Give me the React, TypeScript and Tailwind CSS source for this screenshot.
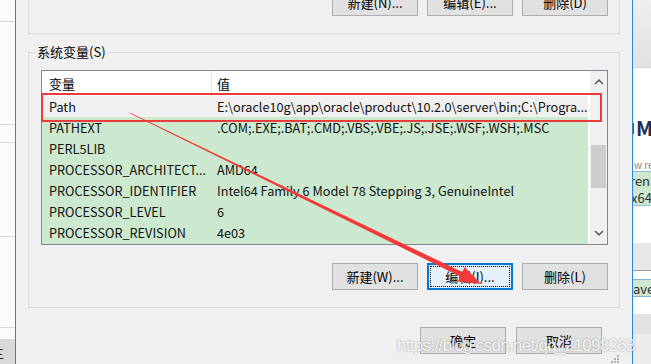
import React from "react";

const rows: [string, string][] = [
  ["Path", "E:\\oracle10g\\app\\oracle\\product\\10.2.0\\server\\bin;C:\\Progra..."],
  ["PATHEXT", ".COM;.EXE;.BAT;.CMD;.VBS;.VBE;.JS;.JSE;.WSF;.WSH;.MSC"],
  ["PERL5LIB", ""],
  ["PROCESSOR_ARCHITECT...", "AMD64"],
  ["PROCESSOR_IDENTIFIER", "Intel64 Family 6 Model 78 Stepping 3, GenuineIntel"],
  ["PROCESSOR_LEVEL", "6"],
  ["PROCESSOR_REVISION", "4e03"],
];

function Btn({ children, focused }: { children: React.ReactNode; focused?: boolean }) {
  if (focused) {
    return (
      <div className="h-[27px] w-[86px] bg-[#e5f1fb] border-2 border-[#0078d7] flex">
        <div className="m-[1px] flex-1 border border-dotted border-black flex items-center justify-center">
          {children}
        </div>
      </div>
    );
  }
  return (
    <div className="h-[27px] w-[86px] bg-[#e1e1e1] border border-[#adadad] flex items-center justify-center">
      {children}
    </div>
  );
}

function Chevron({ up }: { up?: boolean }) {
  return (
    <svg width="10" height="6" viewBox="0 0 10 6">
      <path
        d={up ? "M1 5 L5 1.2 L9 5" : "M1 1 L5 4.8 L9 1"}
        fill="none"
        stroke="#606060"
        strokeWidth="1.6"
      />
    </svg>
  );
}

function LeftStrip() {
  return (
    <div className="w-[15px] h-full shrink-0 flex flex-col bg-[#fbfbfb] overflow-hidden">
      <div className="h-[22px] border-b border-[#d4d4d4]" />
      <div className="h-[103px] border-b border-[#d8d8d8]" />
      <div className="h-[18px] border-b border-[#d8d8d8]" />
      <div className="h-[94px] border-b border-[#d8d8d8]" />
      <div className="h-[91px] border-b border-[#d8d8d8]" />
      <div className="h-[11px]" />
      <div className="flex-1 bg-[#d9d9d9] flex items-center overflow-hidden">
        <span className="ml-[-10px] text-[14px] text-[#222]">主</span>
      </div>
    </div>
  );
}

function RightStrip() {
  return (
    <div className="flex-1 h-full flex flex-col overflow-hidden text-[13px] leading-[17px] whitespace-nowrap">
      <div className="h-[68px] bg-gradient-to-b from-[#eeeeee] to-[#e2e2e2] border-b border-[#d6d6d6]" />
      <div className="h-[172px] bg-white flex flex-col">
        <div className="h-[50px]" />
        <div className="h-[20px] flex items-center">
          <div className="w-[6px] h-[11px] border border-[#555] border-l-0" />
          <span className="ml-[2px] text-[20px] leading-[20px] text-[#1d2f55] font-bold">M</span>
        </div>
        <div className="h-[33px] flex items-end">
          <span className="text-[10px] leading-[12px] text-[#888] ml-[1px]">w re</span>
        </div>
        <div className="h-[35px] bg-[#cfe6cf] border-y border-[#8fbfdc] flex flex-col text-[#333]">
          <span className="h-[17px] ml-[-3px]">rena</span>
          <span className="h-[17px] ml-[-2px]">x64\</span>
        </div>
      </div>
      <div className="h-[3px] bg-white" />
      <div className="h-[28px] bg-[#e7e7e7] border-b border-[#9a9a9a]" />
      <div className="h-[8px] bg-white" />
      <div className="h-[18px] bg-[#cfe6cf] border-y border-[#7fb3db] text-[#333] flex items-center">
        <span>aver</span>
      </div>
      <div className="h-[17px] bg-white" />
      <div className="h-[20px] bg-[#e2e2e2]" />
      <div className="flex-1 bg-[#ececec]" />
    </div>
  );
}

export default function App() {
  return (
    <div className="relative w-[651px] h-[364px] overflow-hidden flex bg-[#f0f0f0] text-[13px] leading-[18px] text-[#000] font-['Noto_Sans_CJK_SC','Noto_Sans',sans-serif]">
      <LeftStrip />
      <div className="w-[618px] h-full shrink-0 border-x border-[#2b86d6] bg-[#f0f0f0] flex flex-col px-[12px]">
        {/* top group (cut off) */}
        <div className="h-[34px] shrink-0 border-x border-b border-[#dcdcdc] flex justify-end items-end pb-[17px] pr-[11px] gap-[9px] overflow-hidden">
          <Btn>新建(N)...</Btn>
          <Btn>编辑(E)...</Btn>
          <Btn>删除(D)</Btn>
        </div>

        {/* system variables group */}
        <div className="relative mt-[18px] h-[256px] shrink-0 border border-[#dcdcdc] flex flex-col pt-[17px] px-[11px]">
          <div className="absolute left-[7px] top-[-10px] px-[1px] bg-[#f0f0f0] leading-[18px]">系统变量(S)</div>

          <div className="relative h-[175px] border border-[#828790] bg-white flex ml-[1px]">
            <div className="flex-1 min-w-0 overflow-hidden flex flex-col text-[12.7px]">
              <div className="h-[25px] flex items-center bg-white text-[13px]">
                <div className="w-[170px] h-full border-r border-[#e5e5e5] flex items-center pl-[7px]">变量</div>
                <div className="pl-[5px]">值</div>
              </div>
              {rows.map(([k, v], i) => (
                <div
                  key={k}
                  className={`h-[21px] flex items-center whitespace-nowrap overflow-hidden mr-[2px] ${
                    i === 0 ? "bg-[#f0f0f0]" : "bg-[#cce8cf]"
                  } text-[#111]`}
                >
                  <div className="w-[170px] pl-[7px] shrink-0 overflow-hidden">{k}</div>
                  <div className="pl-[5px]">{v}</div>
                </div>
              ))}
              <div className="flex-1 bg-[#cce8cf] mr-[2px]" />
            </div>
            <div className="w-[17px] shrink-0 bg-[#f0f0f0] flex flex-col items-center">
              <div className="h-[22px] flex items-center justify-center">
                <Chevron up />
              </div>
              <div className="h-[52px]" />
              <div className="h-[43px] w-[15px] bg-[#cdcdcd]" />
              <div className="flex-1" />
              <div className="h-[22px] flex items-center justify-center">
                <Chevron />
              </div>
            </div>
            <div className="absolute left-[-1px] top-[22px] w-[561px] h-[29px] border-2 border-[#ec3b3b]" />
          </div>

          <div className="mt-[18px] flex justify-end gap-[9px]">
            <Btn>新建(W)...</Btn>
            <Btn focused>编辑(I)...</Btn>
            <Btn>删除(L)</Btn>
          </div>
        </div>

        <div className="mt-[19px] flex justify-end gap-[10px] mr-[18px]">
          <Btn>确定</Btn>
          <Btn>取消</Btn>
        </div>
        <div className="flex-1 flex justify-end items-end pb-[2px]">
          <svg width="10" height="10" viewBox="0 0 10 10">
            <rect x="7" y="1" width="2" height="2" fill="#b0b0b0" />
            <rect x="4" y="4" width="2" height="2" fill="#b0b0b0" />
            <rect x="7" y="4" width="2" height="2" fill="#b0b0b0" />
            <rect x="1" y="7" width="2" height="2" fill="#b0b0b0" />
            <rect x="4" y="7" width="2" height="2" fill="#b0b0b0" />
            <rect x="7" y="7" width="2" height="2" fill="#b0b0b0" />
          </svg>
        </div>
      </div>
      <RightStrip />

      {/* red arrow annotation */}
      <svg className="absolute left-0 top-0 pointer-events-none" width="651" height="364" viewBox="0 0 651 364">
        <polygon points="129.8,112.6 130.2,113.4 460.1,276.5 462.3,272.1" fill="#f23a3a" />
        <polygon points="481,284 457.7,281.5 464.7,267.1" fill="#f23a3a" />
      </svg>

      {/* watermark */}
      <div className="absolute left-[397px] top-[335px] text-[17px] leading-[22px] tracking-[-0.7px] text-white/85 font-['Liberation_Sans',sans-serif] [text-shadow:0_0_2px_rgba(90,90,90,0.6)] pointer-events-none whitespace-nowrap">
        https://blog.csdn.net/qq_21098263
      </div>
    </div>
  );
}
